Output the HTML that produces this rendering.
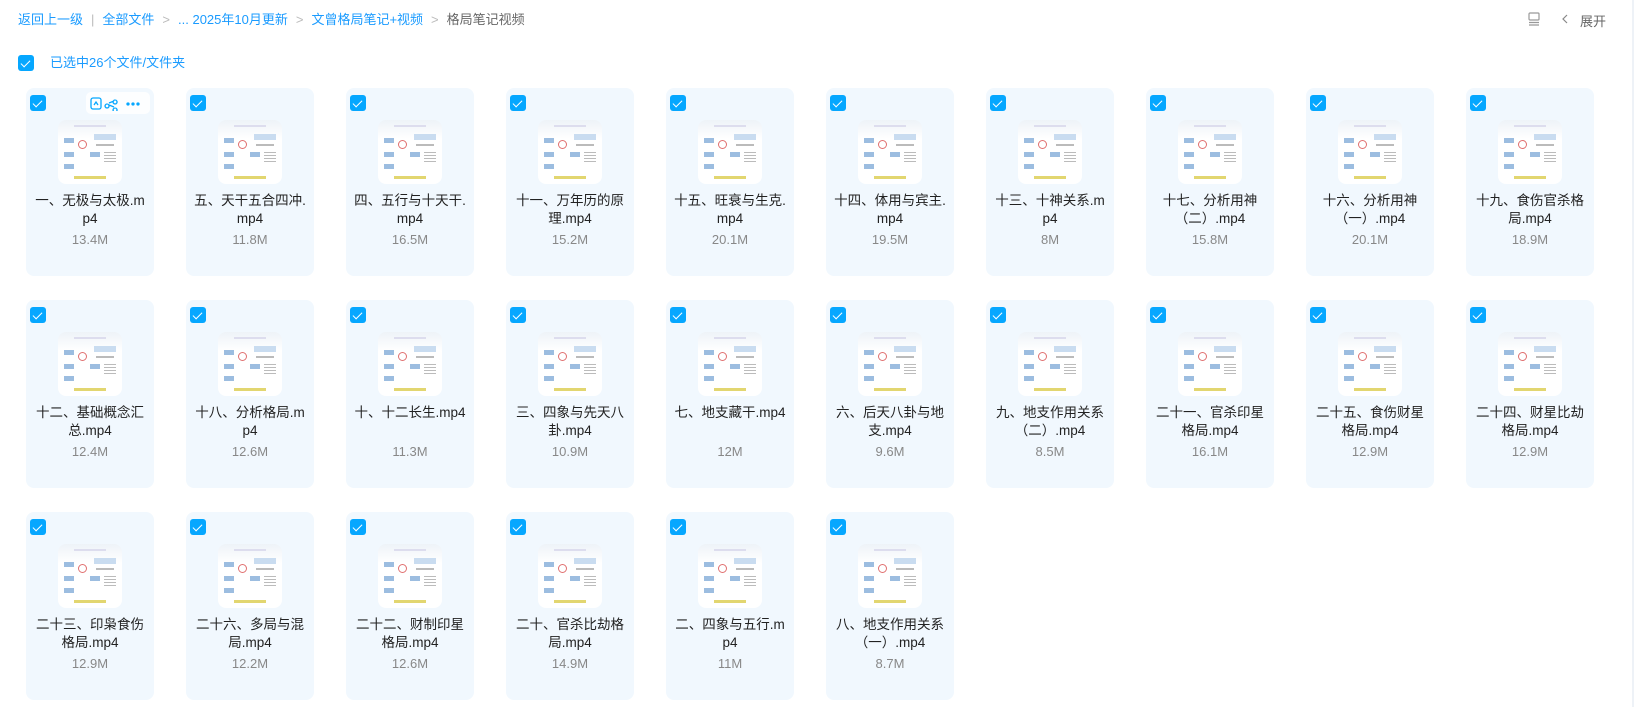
<!DOCTYPE html>
<html><head><meta charset="utf-8"><style>
*{margin:0;padding:0;box-sizing:border-box}
body{width:1634px;height:707px;background:#fff;font-family:"Liberation Sans","Noto Sans CJK SC",sans-serif;position:relative;overflow:hidden}
.bc{position:absolute;top:12px;left:18px;font-size:13px;color:#1a9bff;white-space:nowrap;line-height:16px}
.bc .g{color:#bbb;margin:0 8px}
.bc .d{color:#666}
.cb{position:absolute;width:16px;height:16px;background:#06a7ff;border-radius:3px}
.cb:after{content:"";position:absolute;left:5px;top:2.5px;width:4px;height:8px;border:solid #fff;border-width:0 1.6px 1.6px 0;transform:rotate(45deg)}
.card{position:absolute;width:128px;height:188px;background:#f1f8fe;border-radius:8px}
.card .cb{left:4px;top:7px}
.th{position:absolute;left:32px;top:32px;width:64px;height:64px;border-radius:8px;background:linear-gradient(#eef3f8,#fff 30%);overflow:hidden}
.th i{position:absolute;display:block}
.t{position:absolute;left:4px;right:4px;top:104px;text-align:center;font-size:13.5px;line-height:18px;color:#222}
.s{position:absolute;left:0;right:0;top:144px;text-align:center;font-size:13px;color:#888}
</style></head><body>
<div class="bc">返回上一级<span class="g">|</span>全部文件<span class="g">&gt;</span>... 2025年10月更新<span class="g">&gt;</span>文曾格局笔记+视频<span class="g">&gt;</span><span class="d">格局笔记视频</span></div>
<svg style="position:absolute;left:1527px;top:12px" width="14" height="14" viewBox="0 0 14 14" fill="none" stroke="#999" stroke-width="1.2"><rect x="2" y="1" width="10" height="7" rx="1"/><path d="M2 10.5h10M2 13h10"/></svg>
<svg style="position:absolute;left:1561px;top:14px" width="8" height="10" viewBox="0 0 8 10" fill="none" stroke="#888" stroke-width="1.2"><path d="M6 1L2 5l4 4"/></svg>
<div style="position:absolute;left:1580px;top:11px;font-size:13px;color:#666">展开</div>
<div class="cb" style="left:18px;top:55px"></div>
<div style="position:absolute;left:50px;top:55px;font-size:13px;color:#1a9bff;line-height:16px">已选中26个文件/文件夹</div>
<div style="position:absolute;left:1632px;top:0;width:2px;height:707px;background:#eef2f7"></div>
<div id="g"></div>
<script>
var d=[["一、无极与太极.m<br>p4","13.4M"],["五、天干五合四冲.<br>mp4","11.8M"],["四、五行与十天干.<br>mp4","16.5M"],["十一、万年历的原<br>理.mp4","15.2M"],["十五、旺衰与生克.<br>mp4","20.1M"],["十四、体用与宾主.<br>mp4","19.5M"],["十三、十神关系.m<br>p4","8M"],["十七、分析用神<br>（二）.mp4","15.8M"],["十六、分析用神<br>（一）.mp4","20.1M"],["十九、食伤官杀格<br>局.mp4","18.9M"],
["十二、基础概念汇<br>总.mp4","12.4M"],["十八、分析格局.m<br>p4","12.6M"],["十、十二长生.mp4","11.3M"],["三、四象与先天八<br>卦.mp4","10.9M"],["七、地支藏干.mp4","12M"],["六、后天八卦与地<br>支.mp4","9.6M"],["九、地支作用关系<br>（二）.mp4","8.5M"],["二十一、官杀印星<br>格局.mp4","16.1M"],["二十五、食伤财星<br>格局.mp4","12.9M"],["二十四、财星比劫<br>格局.mp4","12.9M"],
["二十三、印枭食伤<br>格局.mp4","12.9M"],["二十六、多局与混<br>局.mp4","12.2M"],["二十二、财制印星<br>格局.mp4","12.6M"],["二十、官杀比劫格<br>局.mp4","14.9M"],["二、四象与五行.m<br>p4","11M"],["八、地支作用关系<br>（一）.mp4","8.7M"]];
var h="";
d.forEach(function(e,i){var r=Math.floor(i/10),c=i%10;var x=26+160*c,y=88+212*r;
var th='<i style="left:16px;top:5px;width:32px;height:2px;background:#dde"></i>'+
'<i style="left:6px;top:18px;width:10px;height:5px;background:#9cbde0"></i><i style="left:6px;top:32px;width:10px;height:5px;background:#9cbde0"></i><i style="left:6px;top:44px;width:10px;height:5px;background:#9cbde0"></i>'+
'<i style="left:36px;top:14px;width:22px;height:6px;background:#c9dcf0"></i><i style="left:38px;top:24px;width:18px;height:2px;background:#bbb"></i><i style="left:32px;top:32px;width:10px;height:5px;background:#9cbde0"></i><i style="left:46px;top:32px;width:12px;height:10px;background:repeating-linear-gradient(#bbb 0 1px,#fff 1px 3px)"></i>'+
'<i style="left:20px;top:20px;width:9px;height:9px;border:1px solid #e07070;border-radius:50%"></i><i style="left:16px;top:56px;width:32px;height:3px;background:#e2d670"></i>';
h+='<div class="card" style="left:'+x+'px;top:'+y+'px"><div class="cb"></div><div class="th">'+th+'</div><div class="t">'+e[0]+'</div><div class="s">'+e[1]+'</div></div>';});
document.getElementById("g").innerHTML=h;
</script>
<div style="position:absolute;left:86px;top:92px;width:64px;height:22px;background:#fff;border-radius:5px;opacity:.85"></div>
<svg style="position:absolute;left:90px;top:97px" width="60" height="14" viewBox="0 0 60 14" fill="none" stroke="#06a7ff" stroke-width="1.3"><rect x="1" y="1" width="10" height="11" rx="2"/><path d="M4 8l2-3 2 3M17 7a2 2 0 1 0 .1 0M25 3a2 2 0 1 0 .1 0M25 11a2 2 0 1 0 .1 0M19 6l5-2M19 8l5 2"/><circle cx="38" cy="7" r="1" fill="#06a7ff"/><circle cx="43" cy="7" r="1" fill="#06a7ff"/><circle cx="48" cy="7" r="1" fill="#06a7ff"/></svg>
</body></html>
